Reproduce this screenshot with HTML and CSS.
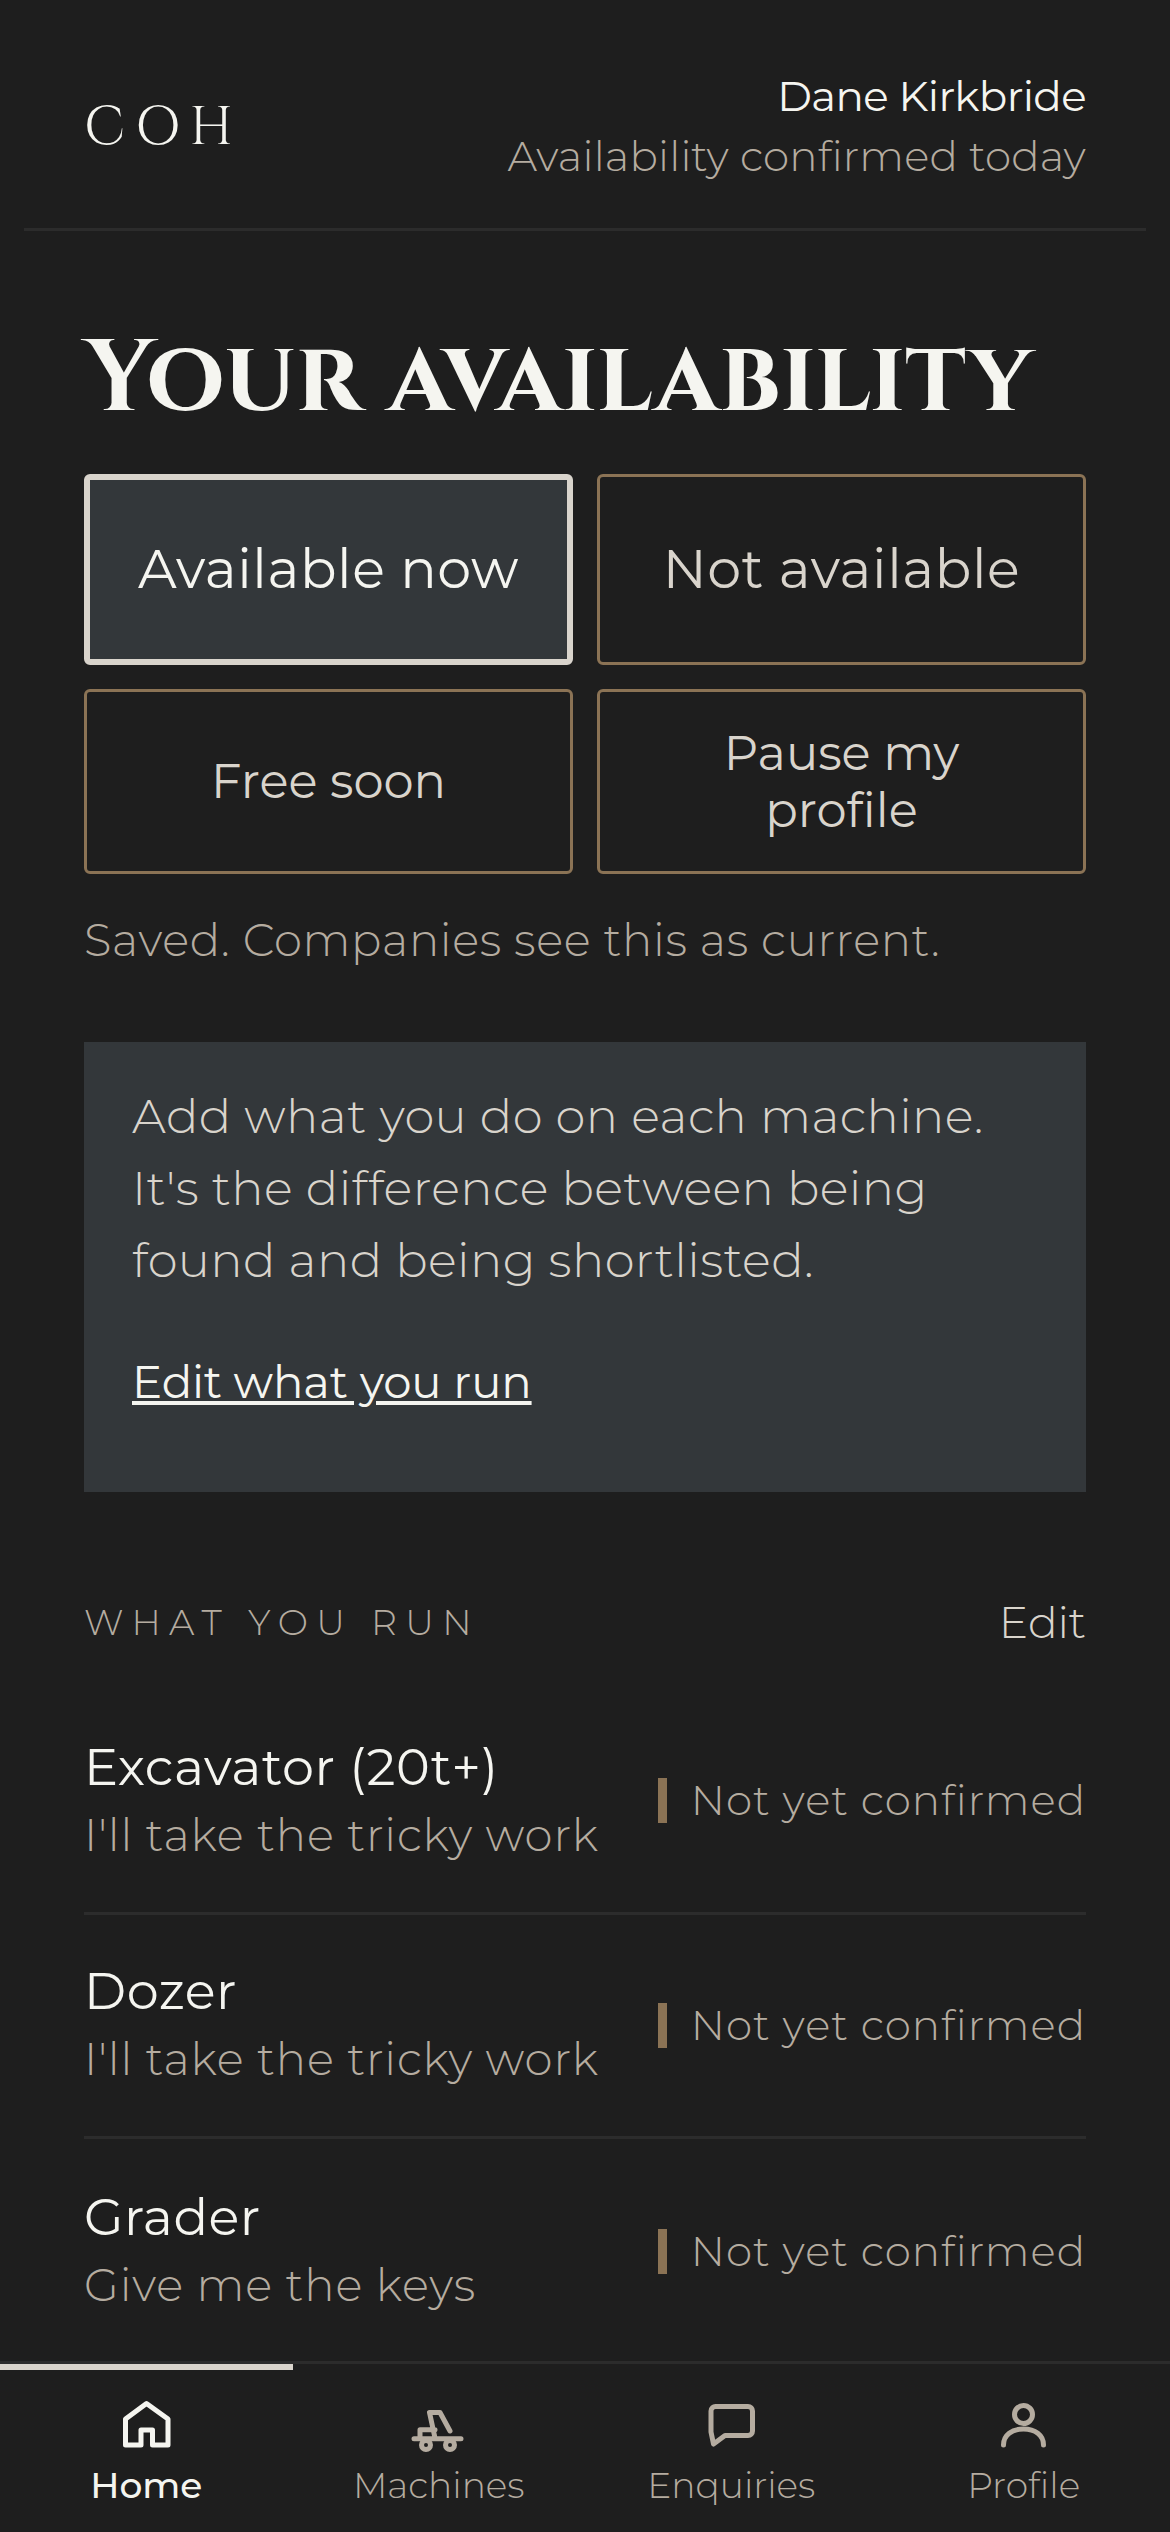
FILE: index.html
```html
<!DOCTYPE html>
<html>
<head>
<meta charset="utf-8">
<title>Your availability</title>
<link rel="stylesheet" href="styles.css">
</head>
<body>
<div class="app">
  <header class="top">
    <div class="logo">COH</div>
    <div class="who">
      <div class="who-name">Dane Kirkbride</div>
      <div class="who-sub">Availability confirmed today</div>
    </div>
  </header>

  <main class="main">
    <h1 class="title">Your availability</h1>

    <div class="choices">
      <div class="choice big active">Available now</div>
      <div class="choice big">Not available</div>
      <div class="choice">Free soon</div>
      <div class="choice">Pause my profile</div>
    </div>
    <p class="saved">Saved. Companies see this as current.</p>

    <div class="prompt">
      <p>Add what you do on each machine. It's the difference between being found and being shortlisted.</p>
      <a class="prompt-link" href="#">Edit what you run</a>
    </div>

    <div class="run-head">
      <span class="run-label">WHAT YOU RUN</span>
      <a class="run-edit" href="#">Edit</a>
    </div>

    <div class="machine">
      <div>
        <div class="machine-name">Excavator (20t+)</div>
        <div class="machine-note">I'll take the tricky work</div>
      </div>
      <div class="status">Not yet confirmed</div>
    </div>
    <div class="machine">
      <div>
        <div class="machine-name">Dozer</div>
        <div class="machine-note">I'll take the tricky work</div>
      </div>
      <div class="status">Not yet confirmed</div>
    </div>
    <div class="machine last">
      <div>
        <div class="machine-name">Grader</div>
        <div class="machine-note">Give me the keys</div>
      </div>
      <div class="status">Not yet confirmed</div>
    </div>
  </main>

  <nav class="nav">
    <a class="tab on" href="#">
      <svg viewBox="0 0 60 60"><path d="M30.5 9.5L52 25v26H36.5V36H25v15H9.5V25z"/></svg>
      <span>Home</span>
    </a>
    <a class="tab" href="#">
      <svg viewBox="0 0 60 60"><path d="M5 44.7h47M11 44.7v-9h15M26 44L20.5 18.5H31L41 37"/><circle cx="17" cy="51" r="4.5"/><circle cx="41" cy="51" r="4.5"/></svg>
      <span>Machines</span>
    </a>
    <a class="tab" href="#">
      <svg viewBox="0 0 60 60"><path d="M15 12.5h32a4.5 4.5 0 0 1 4.5 4.5v20a4.5 4.5 0 0 1-4.5 4.5H24L12.5 50 10 38V17a4.5 4.5 0 0 1 5-4.5z"/></svg>
      <span>Enquiries</span>
    </a>
    <a class="tab" href="#">
      <svg viewBox="0 0 60 60"><circle cx="29.5" cy="20.5" r="9"/><path d="M9.5 51C9.5 41 18 35 29.5 35s20 6 20 16"/></svg>
      <span>Profile</span>
    </a>
  </nav>
</div>
</body>
</html>
```

FILE: styles.css
```css
* {
   box-sizing: border-box;
}

html, body {
   margin: 0;
   padding: 0;
   background-color: #1e1e1e;
}

body {
   font-family: "Montserrat", "Inter", "Noto Sans", sans-serif;
   font-weight: 300;
   color: #f5f5f0;
}

a {
   color: inherit;
}

.app {
   width: 1170px;
   height: 2532px;
   display: flex;
   flex-direction: column;
   overflow: hidden;
}

.top {
   margin: 0 24px;
   padding: 66px 60px 42px;
   height: 231px;
   display: flex;
   justify-content: space-between;
   align-items: center;
   border-bottom: 3px solid #2c2c2c;
}

.logo {
   padding-top: 2px;
   font-family: "Cinzel", "Liberation Serif", serif;
   font-size: 54px;
   letter-spacing: 10px;
   color: #f5f5f0;
}

.who {
   text-align: right;
}

.who-name {
   font-size: 42px;
   line-height: 60px;
   font-weight: 400;
   letter-spacing: -0.6px;
}

.who-sub {
   font-size: 42px;
   line-height: 60px;
   letter-spacing: 0.2px;
   color: #b5aca0;
}

.main {
   flex: 1;
   padding: 0 84px;
   overflow: hidden;
}

.title {
   margin: 99px 0 45px;
   font-family: "Cinzel", "Liberation Serif", serif;
   font-weight: 600;
   font-size: 101px;
   line-height: 99px;
   white-space: nowrap;
   color: #f5f5f0;
}

.choices {
   display: grid;
   grid-template-columns: 1fr 1fr;
   grid-template-rows: 191px 185px;
   gap: 24px;
}

.choice {
   display: flex;
   align-items: center;
   justify-content: center;
   padding: 0 84px;
   border: 3px solid #8b7355;
   border-radius: 6px;
   font-size: 48px;
   font-weight: 400;
   line-height: 57px;
   text-align: center;
   color: #d9d4cc;
}

.choice.big {
   font-size: 54px;
   letter-spacing: 0.6px;
   padding: 0 12px;
}

.choice.active {
   border: 6px solid #d9d4cc;
   background-color: #33373a;
   color: #f5f5f0;
}

.saved {
   margin: 42px 0 0;
   font-size: 45px;
   line-height: 48px;
   letter-spacing: 0.65px;
   color: #b5aca0;
}

.prompt {
   margin-top: 78px;
   padding: 38px 48px 60px;
   height: 450px;
   background-color: #33373a;
}

.prompt p {
   margin: 0 0 50px;
   font-size: 48px;
   line-height: 72px;
   letter-spacing: 0.4px;
   color: #d9d4cc;
}

.prompt-link {
   font-size: 45px;
   line-height: 72px;
   font-weight: 400;
   letter-spacing: -0.1px;
   color: #f5f5f0;
}

.run-head {
   margin-top: 103px;
   display: flex;
   justify-content: space-between;
   align-items: center;
}

.run-label {
   font-size: 36px;
   letter-spacing: 8.4px;
   color: #b5aca0;
}

.run-edit {
   font-size: 44px;
   text-decoration: none;
   color: #d9d4cc;
}

.machine {
   height: 224.5px;
   display: flex;
   justify-content: space-between;
   align-items: center;
   border-bottom: 3px solid #2c2c2c;
}

.run-head + .machine {
   margin-top: 41px;
}

.machine.last {
   border-bottom: none;
}

.machine-name {
   font-size: 51px;
   line-height: 68px;
   font-weight: 400;
   letter-spacing: 0.5px;
}

.machine-note {
   font-size: 45px;
   line-height: 68px;
   letter-spacing: 0.9px;
   color: #b5aca0;
}

.status {
   padding-left: 24px;
   border-left: 9px solid #8b7355;
   font-size: 42px;
   line-height: 45px;
   letter-spacing: 1px;
   color: #b5aca0;
}

.nav {
   position: relative;
   height: 171px;
   display: flex;
   border-top: 3px solid #2c2c2c;
}

.tab {
   flex: 1;
   display: flex;
   flex-direction: column;
   align-items: center;
   padding-top: 30px;
   text-decoration: none;
   font-size: 36px;
   color: #b5aca0;
}

.tab svg {
   width: 60px;
   height: 60px;
   fill: none;
   stroke: currentColor;
   stroke-width: 5;
   stroke-linejoin: round;
   stroke-linecap: round;
}

.tab span {
   margin-top: 9px;
}

.tab.on {
   color: #f5f5f0;
   font-weight: 500;
   box-shadow: inset 0 6px 0 #d9d4cc;
}
```
